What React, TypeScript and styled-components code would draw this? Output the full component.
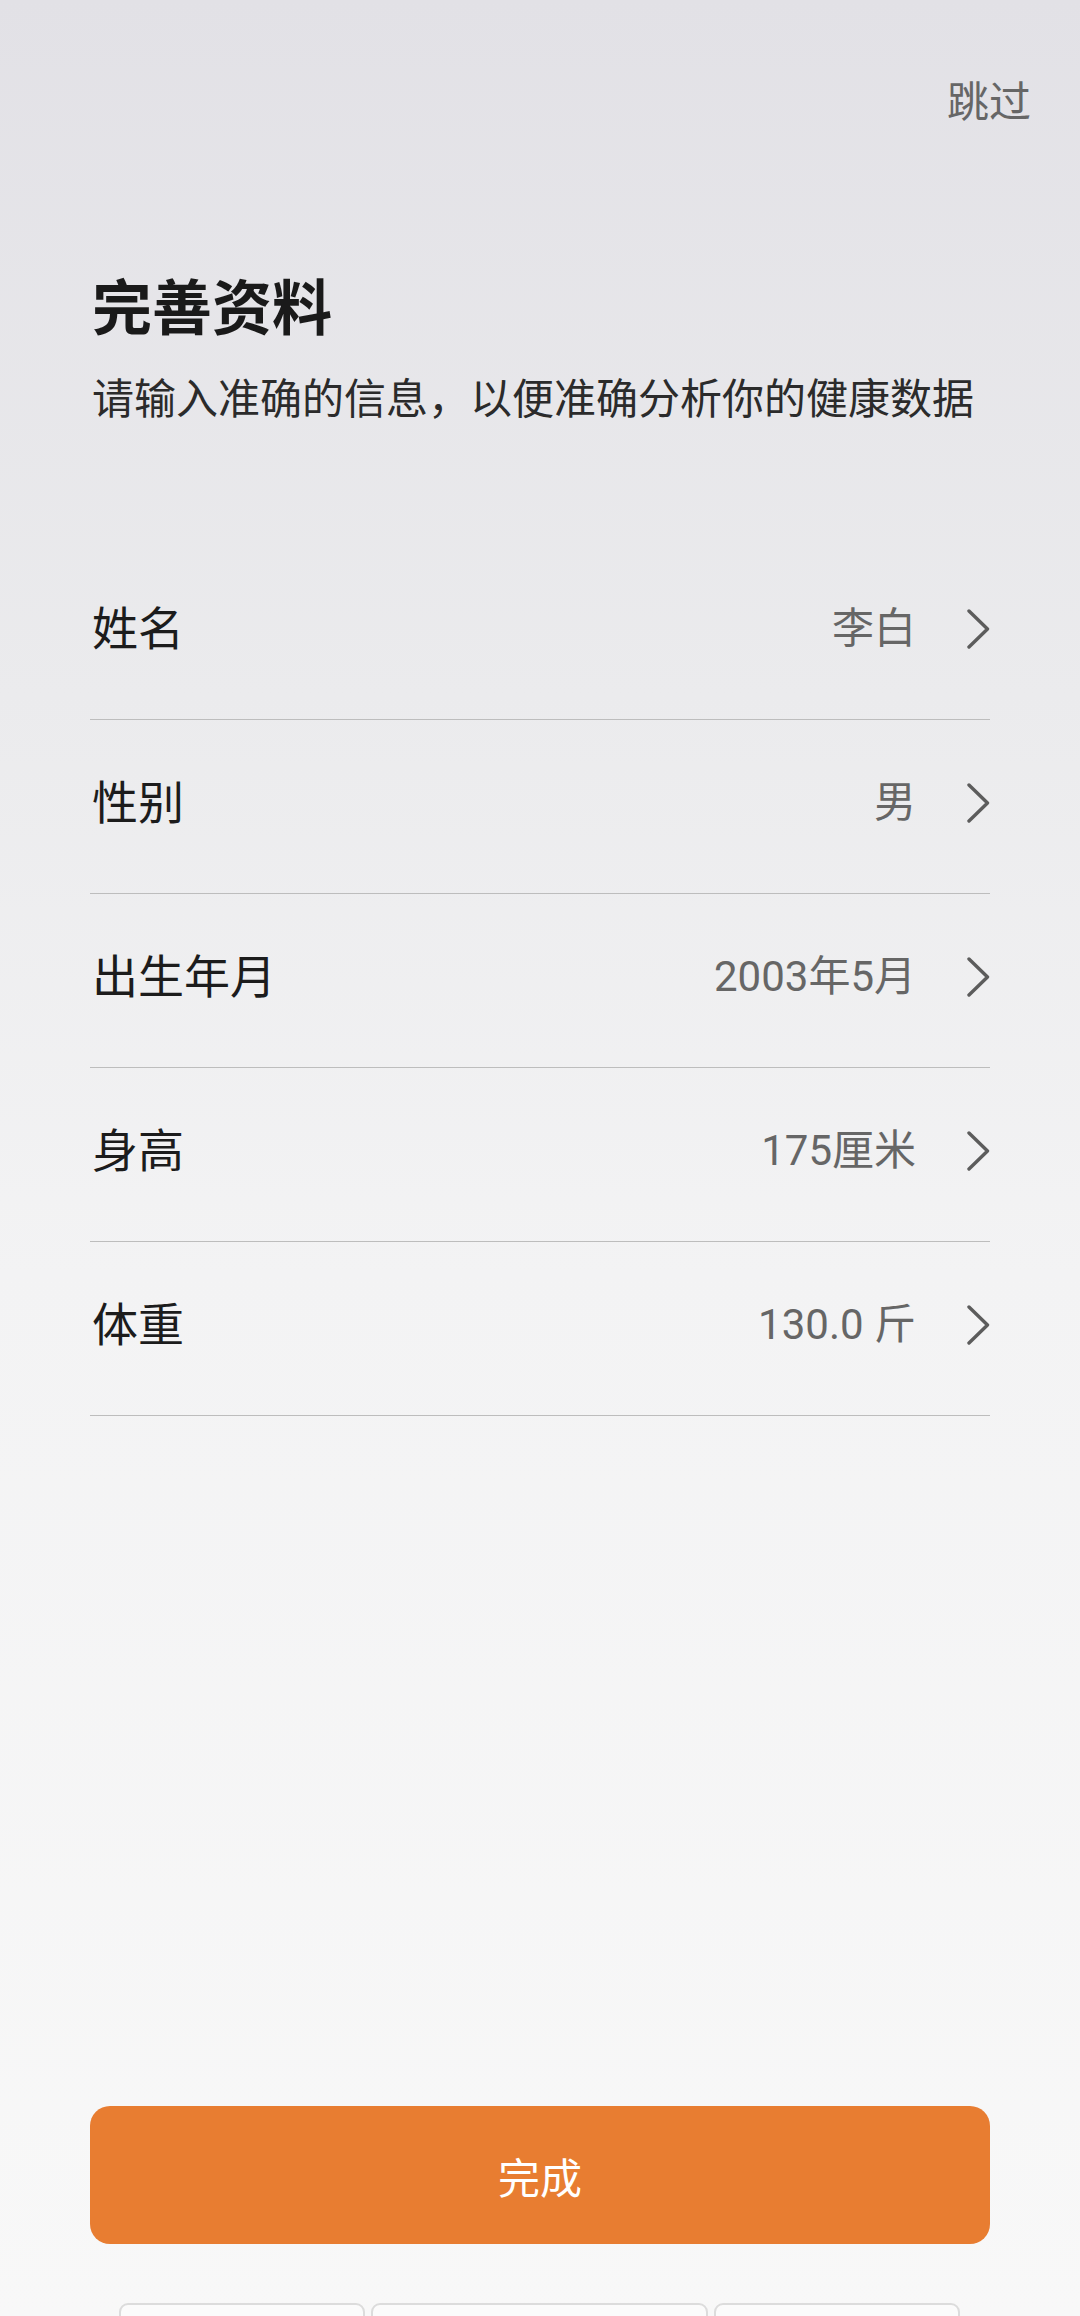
import React from "react";
import styled, { createGlobalStyle } from "styled-components";

const GlobalStyle = createGlobalStyle`
    html, body {
        margin: 0;
        padding: 0;
    }
    body {
        font-family: "Roboto", "Noto Sans CJK SC", sans-serif;
    }
`

const Page = styled.div`
    width: 1080px;
    height: 2316px;
    overflow: hidden;
    display: flex;
    flex-direction: column;
    background: linear-gradient(180deg, #e2e1e6 0%, #ebebed 30%, #f3f3f4 55%, #f8f8f8 100%);
`

const TopBar = styled.div`
    display: flex;
    justify-content: flex-end;
    padding: 78px 49px 0 0;
`

const Skip = styled.span`
    font-size: 42px;
    line-height: 50px;
    color: #666666;
`

const Heading = styled.div`
    padding: 146px 90px 0 92px;
    display: flex;
    flex-direction: column;
    gap: 29px;
`

const Title = styled.h1`
    margin: 0;
    font-size: 60px;
    line-height: 72px;
    font-weight: 700;
    color: #1a1a1a;
`

const Subtitle = styled.p`
    margin: 0;
    font-size: 42px;
    line-height: 50px;
    color: #2b2b2b;
`

const List = styled.ul`
    list-style: none;
    margin: 121px 90px 0;
    padding: 0;
`

const Row = styled.li`
    height: 174px;
    box-sizing: border-box;
    padding-bottom: 8px;
    border-bottom: 1.5px solid #bdbdbd;
    display: flex;
    align-items: center;
`

const Label = styled.span`
    flex: 1;
    padding-left: 2px;
    font-size: 46px;
    line-height: 56px;
    color: #1c1c1c;
`

const Value = styled.span`
    font-size: 42px;
    line-height: 50px;
    color: #666666;
`

const Chevron = styled.svg`
    width: 23px;
    height: 40px;
    margin-left: 51px;
    flex-shrink: 0;
`

const Spacer = styled.div`
    flex: 1;
`

const DoneButton = styled.button`
    margin: 0 90px;
    height: 138px;
    flex-shrink: 0;
    border: 0;
    border-radius: 20px;
    background: #e87d31;
    color: #ffffff;
    font-family: "Noto Sans CJK SC", sans-serif;
    font-size: 42px;
    cursor: pointer;
`

// only the top edge of this strip shows at the bottom of the screen
const Footer = styled.div`
    display: flex;
    align-items: flex-start;
    gap: 6px;
    padding: 59px 120px 0 119px;
    height: 13px;
    flex-shrink: 0;
`

const Slot = styled.div<{ $grow: number }>`
    flex: ${p => p.$grow};
    height: 24px;
    flex-shrink: 0;
    box-sizing: border-box;
    border: 2px solid #dcdcdc;
    border-radius: 9px;
    background: #fbfbfb;
`

const fields = [
    { label: "姓名", value: "李白" },
    { label: "性别", value: "男" },
    { label: "出生年月", value: "2003年5月" },
    { label: "身高", value: "175厘米" },
    { label: "体重", value: "130.0 斤" },
]

const ChevronIcon = () => (
    <Chevron viewBox="0 0 23 40">
        <polyline points="2,2 20.5,20 2,38" fill="none" stroke="#5c5c5c" strokeWidth="3.4" strokeLinecap="round" strokeLinejoin="round" />
    </Chevron>
)

export default function App() {
    return (
        <>
            <GlobalStyle />
            <Page>
                <TopBar>
                    <Skip>跳过</Skip>
                </TopBar>
                <Heading>
                    <Title>完善资料</Title>
                    <Subtitle>请输入准确的信息，以便准确分析你的健康数据</Subtitle>
                </Heading>
                <List>
                    {fields.map(f => (
                        <Row key={f.label}>
                            <Label>{f.label}</Label>
                            <Value>{f.value}</Value>
                            <ChevronIcon />
                        </Row>
                    ))}
                </List>
                <Spacer />
                <DoneButton>完成</DoneButton>
                <Footer>
                    <Slot $grow={246} />
                    <Slot $grow={338} />
                    <Slot $grow={246} />
                </Footer>
            </Page>
        </>
    )
}
